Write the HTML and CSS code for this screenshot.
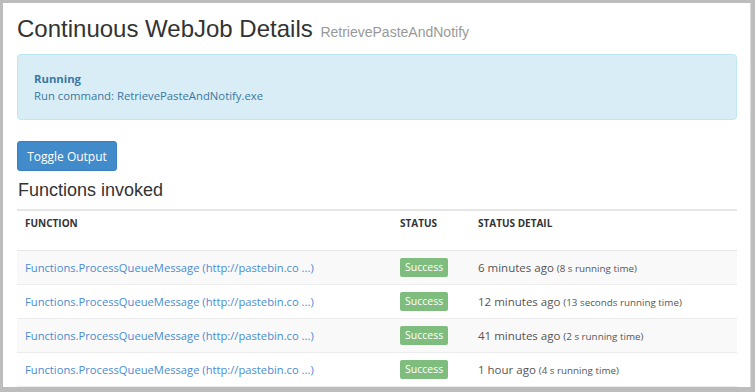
FILE: index.html
```html
<!DOCTYPE html>
<html>
<head>
<meta charset="utf-8">
<link rel="stylesheet" href="styles.css">
</head>
<body>
<div class="panel">
  <h1 class="title">Continuous WebJob Details <small>RetrievePasteAndNotify</small></h1>
  <div class="alert">
    <div class="alert-head">Running</div>
    <div>Run command: RetrievePasteAndNotify.exe</div>
  </div>
  <button class="btn">Toggle Output</button>
  <h3 class="sub">Functions invoked</h3>
  <table class="table">
    <thead>
      <tr><th class="c1">FUNCTION</th><th class="c2">STATUS</th><th>STATUS DETAIL</th></tr>
    </thead>
    <tbody>
      <tr><td><a>Functions.ProcessQueueMessage (http://pastebin.co ...)</a></td><td><span class="label">Success</span></td><td>6 minutes ago <small>(8 s running time)</small></td></tr>
      <tr><td><a>Functions.ProcessQueueMessage (http://pastebin.co ...)</a></td><td><span class="label">Success</span></td><td>12 minutes ago <small>(13 seconds running time)</small></td></tr>
      <tr><td><a>Functions.ProcessQueueMessage (http://pastebin.co ...)</a></td><td><span class="label">Success</span></td><td>41 minutes ago <small>(2 s running time)</small></td></tr>
      <tr><td><a>Functions.ProcessQueueMessage (http://pastebin.co ...)</a></td><td><span class="label">Success</span></td><td>1 hour ago <small>(4 s running time)</small></td></tr>
    </tbody>
  </table>
</div>
</body>
</html>
```
FILE: styles.css
```css
html, body { margin: 0; padding: 0; }
body {
  background: #bdbdbd;
  width: 755px;
  height: 392px;
  overflow: hidden;
  font-family: "Open Sans", "Noto Sans", sans-serif;
  font-size: 11.3px;
  color: #333;
}
.panel {
  margin: 3px 0 0 3px;
  width: 748px;
  height: 384px;
  background: #fff;
  border-right: 1px solid #d8d8d8;
  box-sizing: border-box;
  padding: 13px 14px 0 14px;
  overflow: hidden;
}
.title {
  font-family: "Liberation Sans", Arial, sans-serif;
  font-weight: normal;
  font-size: 24px;
  line-height: 26px;
  margin: 0 0 9px 0;
  color: #333;
}
.title small {
  font-size: 14px;
  color: #999;
  margin-left: 1px;
}
.alert {
  background: #d9edf7;
  border: 1px solid #bce8f1;
  border-radius: 4px;
  color: #3a77a0;
  padding: 15px 16px 15px 16px;
  line-height: 17px;
  margin-bottom: 21px;
  width: 720px;
  box-sizing: border-box;
}
.alert-head { font-weight: bold; }
.btn {
  display: block;
  background: #428bca;
  border: 1px solid #3a80c0;
  border-radius: 3px;
  color: #fff;
  font-family: "Open Sans", "Noto Sans", sans-serif;
  font-size: 12px;
  height: 30px;
  width: 100px;
  padding: 0;
  margin: 0;
}
.sub {
  font-family: "Liberation Sans", Arial, sans-serif;
  font-weight: normal;
  font-size: 18px;
  line-height: 20px;
  margin: 9px 0 9px 1px;
  color: #333;
}
.table {
  width: 720px;
  border-collapse: collapse;
  border-top: 2px solid #e6e6e6;
  table-layout: fixed;
}
.table th {
  text-align: left;
  font-size: 10px;
  font-weight: bold;
  height: 40px;
  padding: 0 8px;
  vertical-align: top;
  padding-top: 5px;
  box-sizing: border-box;
  border-bottom: 1px solid #e6e6e6;
  color: #333;
}
.table th.c1 { width: 375px; }
.table th.c2 { width: 78px; }
.table td {
  height: 34px;
  padding: 0 8px;
  border-bottom: 1px solid #ececec;
  vertical-align: middle;
  box-sizing: border-box;
  font-size: 11.5px;
  color: #555;
  white-space: nowrap;
}
.table tbody tr:nth-child(odd) td { background: #f9f9f9; }
.table td a { color: #4a8cd4; font-size: 11.2px; }
.table td small { font-size: 9.8px; }
.label {
  display: inline-block;
  background: #7fbd7f;
  color: #fff;
  font-size: 10.5px;
  border-radius: 2px;
  padding: 1px 5px 2px 5px;
  line-height: 16px;
}
```
